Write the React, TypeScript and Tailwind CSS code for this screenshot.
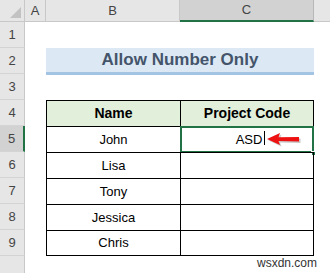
import React from 'react';

const rows = [
  { n: 1, kind: 'blank' },
  { n: 2, kind: 'title' },
  { n: 3, kind: 'blank' },
  { n: 4, kind: 'head' },
  { n: 5, kind: 'data', name: 'John', code: 'ASD' },
  { n: 6, kind: 'data', name: 'Lisa' },
  { n: 7, kind: 'data', name: 'Tony' },
  { n: 8, kind: 'data', name: 'Jessica' },
  { n: 9, kind: 'data', name: 'Chris', last: true },
  { n: 10, kind: 'blank' },
];

const RowHead = ({ n, active }: { n: number; active?: boolean }) => (
  <div
    className={`w-[25px] shrink-0 h-full flex items-center justify-center text-[13px] text-[#444] border-b border-[#d4d4d4] ${
      active ? 'bg-[#d2d2d2] border-r-2 border-r-[#217346]' : 'bg-[#e6e6e6] border-r border-r-[#c8c8c8]'
    }`}
  >
    {n === 10 ? '' : n}
  </div>
);

const App: React.FC = () => {
  return (
    <div className="relative w-[330px] h-[273px] overflow-hidden bg-white font-['Liberation_Sans',Arial,sans-serif]">
      {/* column headers */}
      <div className="flex h-[22px]">
        <div className="w-[25px] shrink-0 h-full bg-[#e6e6e6] border-r border-b border-[#c8c8c8] relative">
          <svg className="absolute right-[3px] bottom-[3px]" width="11" height="11" viewBox="0 0 11 11">
            <polygon points="11,0 11,11 0,11" fill="#c2c2c2" />
          </svg>
        </div>
        <div className="w-[21px] shrink-0 h-full bg-[#e6e6e6] border-r border-b border-[#c8c8c8] flex items-center justify-center text-[13px] text-[#444]">A</div>
        <div className="w-[134px] shrink-0 h-full bg-[#e6e6e6] border-r border-b border-[#c8c8c8] flex items-center justify-center text-[13px] text-[#444]">B</div>
        <div className="w-[134px] shrink-0 h-full bg-[#d2d2d2] border-r border-r-[#b8b8b8] border-b-2 border-b-[#217346] flex items-center justify-center text-[13px] text-[#444]">C</div>
        <div className="flex-1 h-full bg-[#e6e6e6] border-b border-[#c8c8c8]" />
      </div>

      {rows.map((r) => (
        <div key={r.n} className="flex h-[26px]">
          <RowHead n={r.n} active={r.n === 5} />
          <div className="w-[21px] shrink-0" />
          {r.kind === 'blank' && <div className="w-[268px] shrink-0" />}
          {r.kind === 'title' && (
            <div className="w-[268px] shrink-0 h-[27px] bg-[#dce9f5] border-b-[3px] border-[#a3c4e3] flex items-center justify-center text-[17px] font-bold text-[#44546a]">
              Allow Number Only
            </div>
          )}
          {r.kind === 'head' && (
            <>
              <div className="w-[134px] shrink-0 bg-[#e2efda] border-l border-t border-black flex items-center justify-center text-[14px] font-bold text-black">
                Name
              </div>
              <div className="w-[134px] shrink-0 bg-[#e2efda] border-l border-r border-t border-black flex items-center justify-center text-[14px] font-bold text-black">
                Project Code
              </div>
            </>
          )}
          {r.kind === 'data' && (
            <>
              <div className={`w-[134px] shrink-0 border-l border-t border-black flex items-center justify-center text-[13px] text-black ${r.last ? 'border-b' : ''}`}>
                {r.name}
              </div>
              <div className={`w-[134px] shrink-0 border-l border-r border-t border-black relative flex items-center justify-center text-[13px] text-black ${r.last ? 'border-b' : ''}`}>
                {r.code && (
                  <>
                    <div className="absolute -left-px -top-px w-[134px] h-[27px] border-2 border-[#217346]" />
                    <div className="absolute right-[-3px] bottom-[-4px] w-[5px] h-[5px] bg-[#217346] border border-white" />
                    <span className="relative left-[2px]">
                      {r.code}
                      <span className="absolute right-[-3px] top-[1px] w-px h-[14px] bg-black" />
                    </span>
                    <svg className="absolute left-[86px] top-[5px]" width="36" height="16" viewBox="0 0 36 16">
                      <polygon points="0,7 13,1 11.5,5.2 32,5 32,9.5 11.5,9 13,13" fill="#9a9a9a" transform="translate(1.5,1.5)" opacity="0.55" />
                      <polygon points="0,7 13,1 11.5,5.2 32,5 32,9.5 11.5,9 13,13" fill="#ee1111" />
                    </svg>
                  </>
                )}
              </div>
            </>
          )}
        </div>
      ))}
      <div className="absolute left-[257px] top-[257px] text-[12px] text-[#333] leading-none">wsxdn.com</div>
    </div>
  );
};

export default App;
